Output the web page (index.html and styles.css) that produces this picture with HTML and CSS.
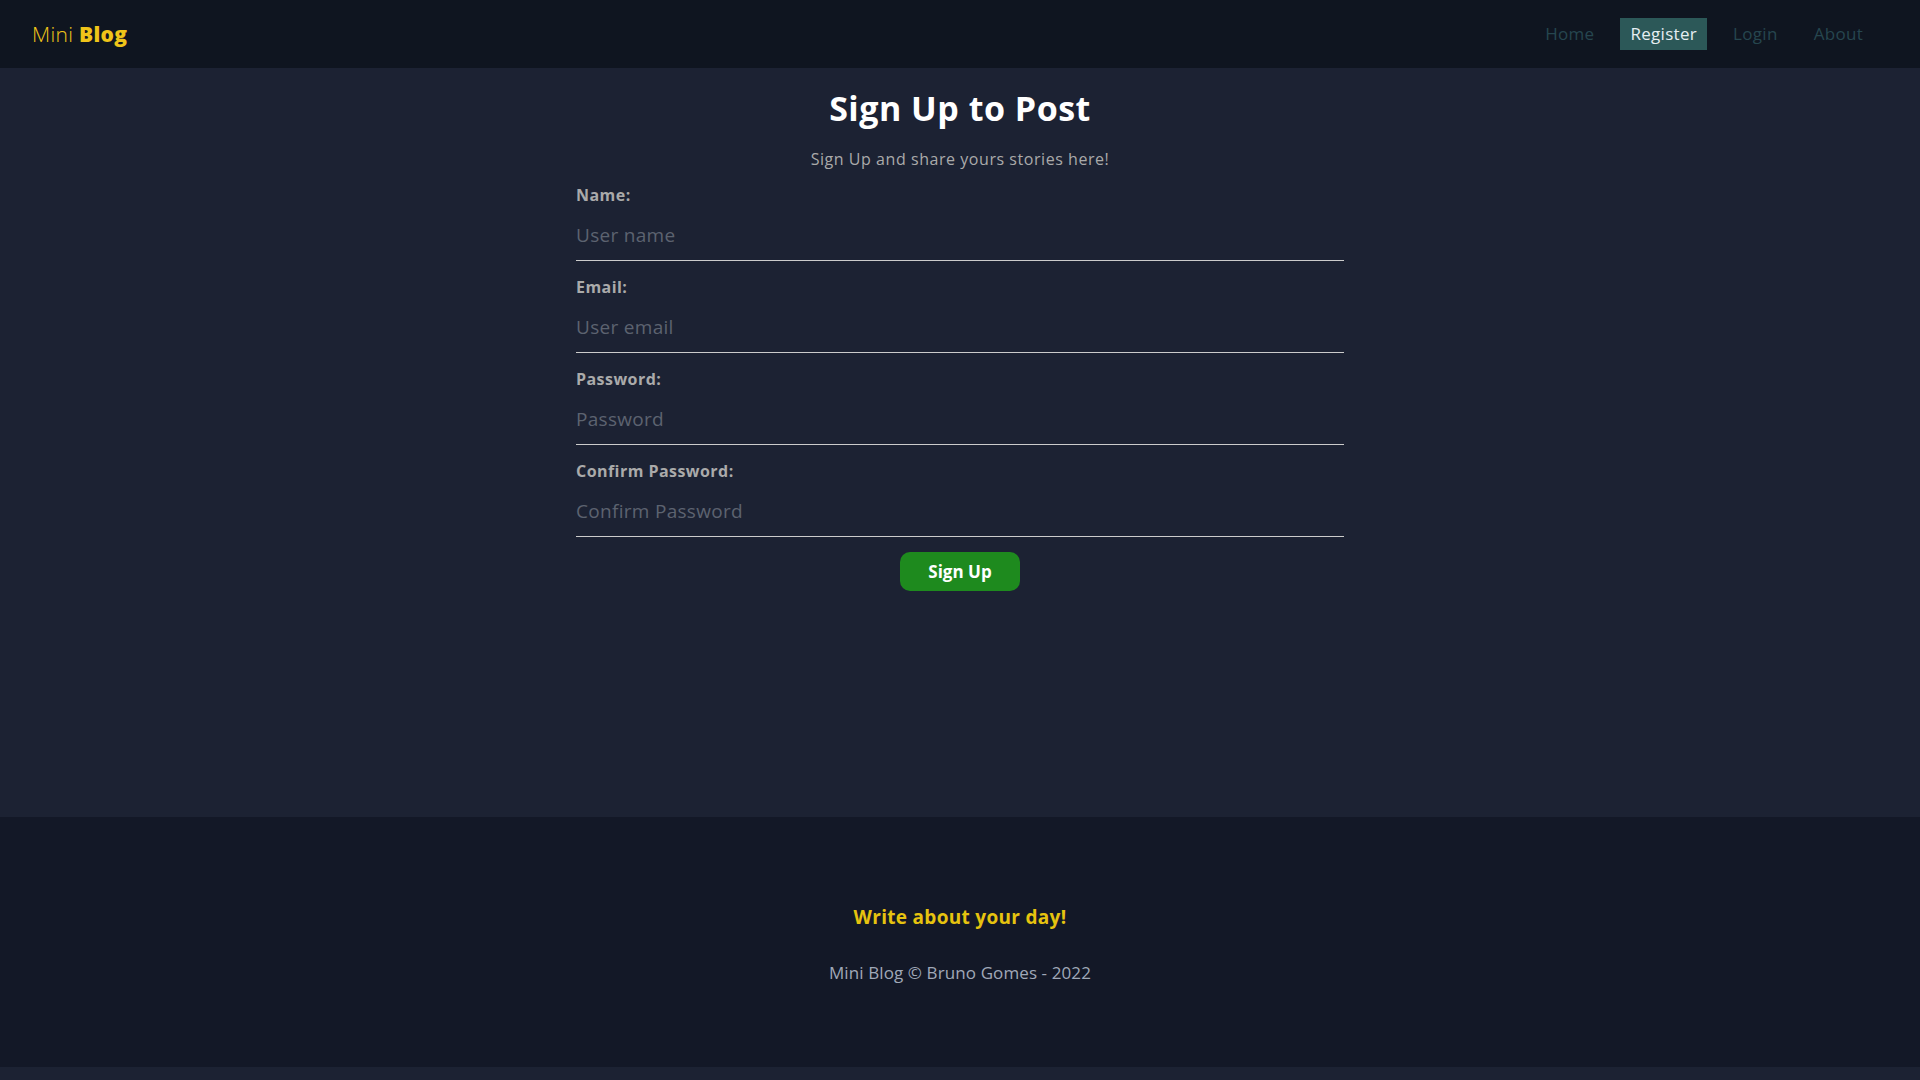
FILE: index.html
```html
<!DOCTYPE html>
<html lang="en">
<head>
<meta charset="utf-8">
<title>Mini Blog</title>
<link rel="stylesheet" href="styles.css">
</head>
<body>
<header class="navbar">
  <a class="brand" href="#">Mini <span class="brand-bold">Blog</span></a>
  <nav class="nav-links">
    <a class="nav-link" href="#">Home</a>
    <a class="nav-link active" href="#">Register</a>
    <a class="nav-link" href="#">Login</a>
    <a class="nav-link" href="#">About</a>
  </nav>
</header>
<main class="container">
  <section class="register">
    <h1 class="title">Sign Up to Post</h1>
    <p class="subtitle">Sign Up and share yours stories here!</p>
    <form class="form">
      <label class="field">
        <span class="field-label">Name:</span>
        <input class="field-input" type="text" placeholder="User name">
      </label>
      <label class="field">
        <span class="field-label">Email:</span>
        <input class="field-input" type="email" placeholder="User email">
      </label>
      <label class="field">
        <span class="field-label">Password:</span>
        <input class="field-input" type="password" placeholder="Password">
      </label>
      <label class="field">
        <span class="field-label">Confirm Password:</span>
        <input class="field-input" type="password" placeholder="Confirm Password">
      </label>
      <button class="btn" type="button">Sign Up</button>
    </form>
  </section>
</main>
<footer class="footer">
  <h3 class="footer-title">Write about your day!</h3>
  <p class="footer-copy">Mini Blog © Bruno Gomes - 2022</p>
</footer>
</body>
</html>
```
FILE: styles.css
```css
* { box-sizing: border-box; }
html, body { margin: 0; padding: 0; }
body {
  background: #1c2233;
  font-family: "Open Sans", "DejaVu Sans", sans-serif;
  color: #aaa;
  padding-bottom: 13px;
}
a { text-decoration: none; }

.navbar {
  height: 68px;
  background: #0f1520;
  display: flex;
  align-items: center;
  justify-content: space-between;
  padding: 0 47px 0 32px;
}
.brand {
  font-size: 21px;
  color: #f0c419;
  font-weight: 300;
  letter-spacing: 0.3px;
}
.brand-bold { font-weight: 800; }
.nav-links {
  display: flex;
  gap: 16px;
  align-items: center;
}
.nav-link {
  font-size: 17px;
  line-height: 32px;
  padding: 0 10px;
  color: #26464f;
  letter-spacing: 0.3px;
}
.nav-link.active {
  background: #2c5858;
  color: #e6eef2;
}

.container {
  min-height: 749px;
  padding-top: 20px;
}
.register {
  width: 768px;
  margin: 0 auto;
  text-align: center;
}
.title {
  margin: 0;
  font-size: 34px;
  line-height: 40px;
  font-weight: 700;
  color: #fff;
  letter-spacing: 0.5px;
}
.subtitle {
  margin: 19px 0 0;
  font-size: 16px;
  line-height: 24px;
  color: #aaa;
  letter-spacing: 0.55px;
}
.form {
  margin-top: 14px;
  display: flex;
  flex-direction: column;
  gap: 16px;
  text-align: left;
}
.field {
  display: flex;
  flex-direction: column;
}
.field-label {
  font-size: 16px;
  line-height: 20px;
  font-weight: 700;
  color: #aaa;
  letter-spacing: 0.45px;
}
.field-input {
  font-family: inherit;
  font-size: 19px;
  line-height: 24px;
  padding: 18px 0 13px;
  background: transparent;
  border: none;
  border-bottom: 1px solid #ccc;
  color: #ddd;
  outline: none;
  letter-spacing: 0.3px;
}
.field-input::placeholder { color: #5c6370; }
.btn {
  align-self: center;
  margin-top: -1px;
  width: 120px;
  height: 39px;
  border: none;
  border-radius: 10px;
  background: #1e8a1e;
  color: #fff;
  font-family: "Open Sans", sans-serif;
  font-weight: 700;
  font-size: 17px;
}

.footer {
  height: 250px;
  padding-top: 4px;
  background: #131827;
  display: flex;
  flex-direction: column;
  align-items: center;
  justify-content: center;
  text-align: center;
}
.footer-title {
  margin: 0;
  font-size: 19px;
  line-height: 26px;
  font-weight: 700;
  color: #e6c30f;
  letter-spacing: 0.3px;
}
.footer-copy {
  margin: 31px 0 0;
  font-size: 17px;
  line-height: 24px;
  color: #a0a8b8;
  letter-spacing: 0.1px;
}
```
